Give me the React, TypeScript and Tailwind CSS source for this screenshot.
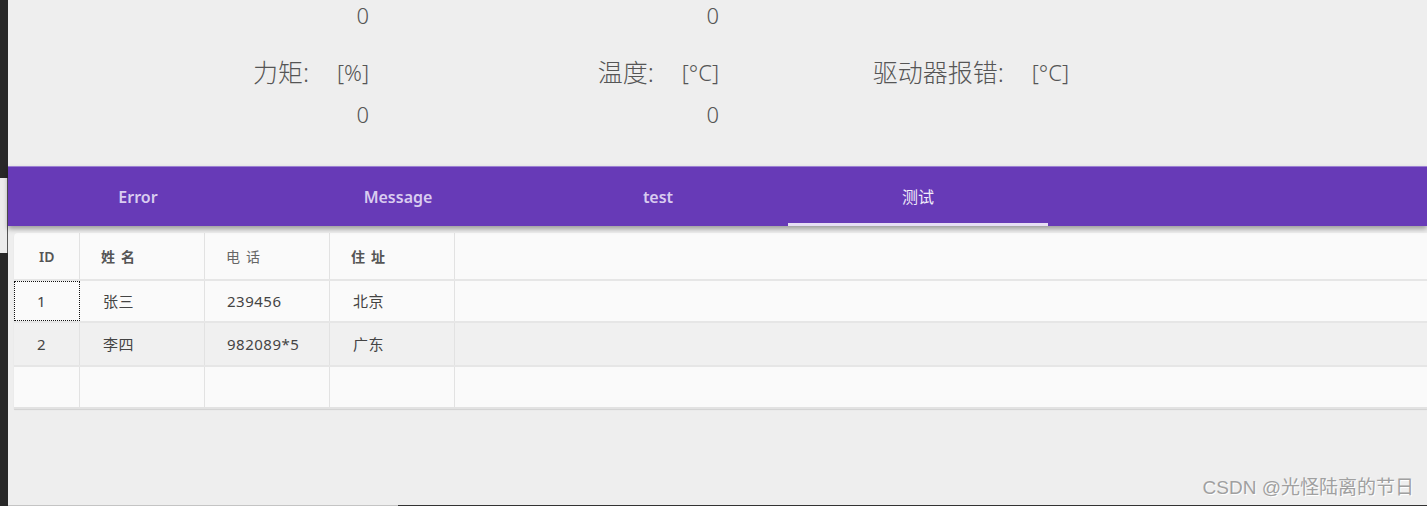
import React from 'react';

const font = { fontFamily: '"Noto Sans", "Noto Sans CJK SC", sans-serif' };

interface Row {
  id: string;
  name: string;
  phone: string;
  addr: string;
}

const rows: Row[] = [
  { id: '1', name: '张三', phone: '239456', addr: '北京' },
  { id: '2', name: '李四', phone: '982089*5', addr: '广东' },
];

const tabs = ['Error', 'Message', 'test', '测试'];

function Reading({ label, unit }: { label: string; unit: string }) {
  return (
    <div className="flex justify-end items-center gap-[28px]">
      <span className="text-[25px]">{label}</span>
      <span>{unit}</span>
    </div>
  );
}

export default function App() {
  return (
    <div className="flex h-[506px] w-[1427px] overflow-hidden bg-[#eeeeee] text-[#555]" style={font}>
      {/* left window edge */}
      <div className="flex w-[8px] shrink-0 flex-col bg-[#282828]">
        <div className="h-[178px]" />
        <div className="h-[75px] border-r border-[#555] bg-[#ececec]" />
      </div>

      <div className="flex min-w-0 flex-1 flex-col">
        {/* readings */}
        <div className="flex h-[166px] flex-col pl-[11px] text-[22px] font-light">
          <div className="grid h-[30px] grid-cols-[350px_350px_350px] items-center text-right leading-none">
            <span>0</span>
            <span>0</span>
            <span />
          </div>
          <div className="mt-[27px] grid h-[30px] grid-cols-[350px_350px_350px] items-center leading-none">
            <Reading label="力矩:" unit="[%]" />
            <Reading label="温度:" unit="[°C]" />
            <Reading label="驱动器报错:" unit="[°C]" />
          </div>
          <div className="mt-[12px] grid h-[30px] grid-cols-[350px_350px_350px] items-center text-right leading-none">
            <span>0</span>
            <span>0</span>
            <span />
          </div>
        </div>

        {/* tab bar */}
        <div className="relative z-10 flex h-[60px] border-t border-[#9b80d2] bg-[#673ab7] shadow-[0_3px_5px_rgba(0,0,0,0.35)]">
          {tabs.map((t, i) => (
            <div
              key={t}
              className={
                i === 3
                  ? 'flex w-[260px] items-center justify-center border-b-[3px] border-[#e6def4] pt-[3px] text-[16px] text-[#f1ecfa]'
                  : 'flex w-[260px] items-center justify-center text-[16px] font-semibold text-[#d9ccf0]'
              }
            >
              {t}
            </div>
          ))}
        </div>

        {/* table */}
        <div className="pl-[6px] pt-[7px]">
          <div className="rounded-tl-[4px] bg-[#fafafa] text-[15px] tracking-[0.5px] text-[#444] shadow-[0_1px_1px_rgba(0,0,0,0.12)]">
            <div className="grid h-[48px] grid-cols-[66px_125px_125px_125px_1fr] border-b-2 border-[#e6e6e6] text-[14px] text-[#555]">
              <div className="flex items-center border-r border-[#e2e2e2] pl-[25px] font-semibold tracking-normal">ID</div>
              <div className="flex items-center border-r border-[#e2e2e2] pl-[21px] font-semibold tracking-[6px]">姓名</div>
              <div className="flex items-center border-r border-[#e2e2e2] pl-[21px] tracking-[6px] text-[#666]">电话</div>
              <div className="flex items-center border-r border-[#e2e2e2] pl-[21px] font-semibold tracking-[6px]">住址</div>
              <div />
            </div>
            {rows.map((r, i) => (
              <div
                key={r.id}
                className={
                  i === 1
                    ? 'grid h-[44px] grid-cols-[66px_125px_125px_125px_1fr] border-b-2 border-[#e6e6e6] bg-[#f0f0f0]'
                    : 'grid h-[42px] grid-cols-[66px_125px_125px_125px_1fr] border-b-2 border-[#e6e6e6]'
                }
              >
                <div
                  className={
                    i === 0
                      ? 'flex items-center border border-dotted border-[#111] pl-[22px]'
                      : 'flex items-center border-r border-[#e2e2e2] pl-[23px]'
                  }
                >
                  {r.id}
                </div>
                <div className="flex items-center border-r border-[#e2e2e2] pl-[23px]">{r.name}</div>
                <div className="flex items-center border-r border-[#e2e2e2] pl-[22px]">{r.phone}</div>
                <div className="flex items-center border-r border-[#e2e2e2] pl-[23px]">{r.addr}</div>
                <div />
              </div>
            ))}
            <div className="grid h-[42px] grid-cols-[66px_125px_125px_125px_1fr] border-b-2 border-[#e2e2e2]">
              <div className="border-r border-[#e2e2e2]" />
              <div className="border-r border-[#e2e2e2]" />
              <div className="border-r border-[#e2e2e2]" />
              <div className="border-r border-[#e2e2e2]" />
              <div />
            </div>
          </div>
        </div>

        {/* footer with watermark */}
        <div className="flex flex-1 items-end justify-end pb-[8px] pr-[13px]">
          <span
            className="text-[19px] leading-none text-[#a0a0a0] [text-shadow:1px_1px_0_#ffffff]"
            style={{ fontFamily: '"Liberation Sans", "Noto Sans CJK SC", sans-serif' }}
          >
            CSDN @光怪陆离的节日
          </span>
        </div>
        <div className="flex h-[1px] shrink-0">
          <div className="w-[390px] bg-[#c4c4c4]" />
          <div className="flex-1 bg-[#333]" />
        </div>
      </div>
    </div>
  );
}
